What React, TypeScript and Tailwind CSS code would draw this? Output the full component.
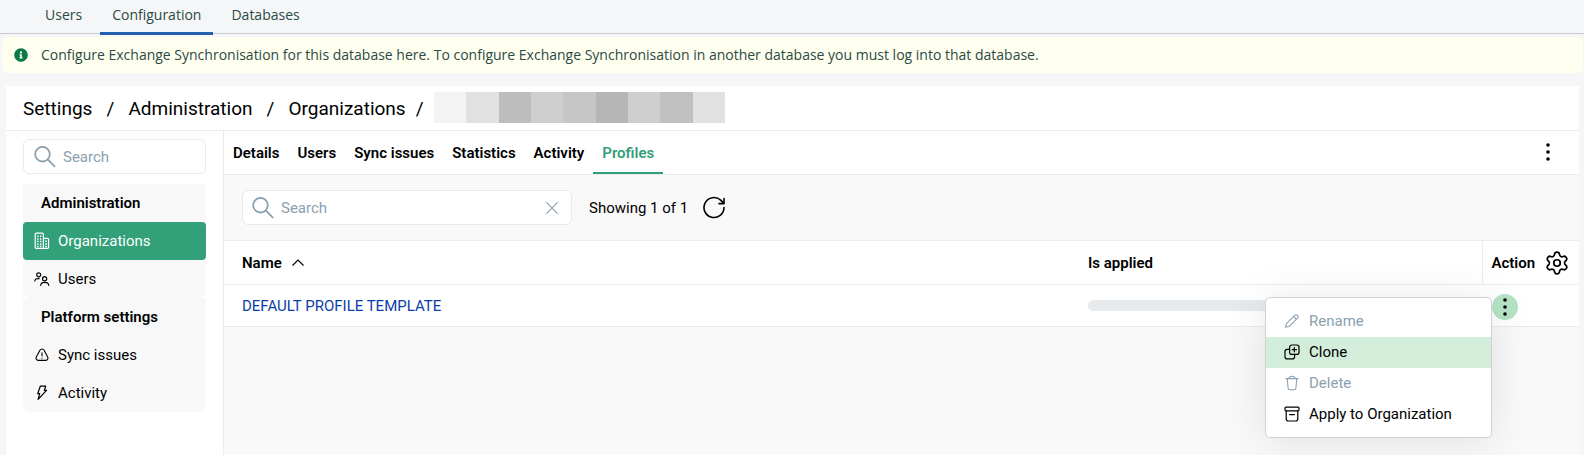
import React from 'react';
import { Settings } from 'lucide-react';
import { FaInfoCircle } from 'react-icons/fa';

interface IconProps {
  className?: string;
}

const SearchIcon: React.FC<IconProps> = ({ className }) => (
  <svg viewBox="0 0 22 22" fill="none" stroke="currentColor" strokeWidth="1.8" strokeLinecap="round" className={className}>
    <circle cx="8.5" cy="8.2" r="7.3" />
    <path d="M13.7 13.4 20.6 20.3" />
  </svg>
);

const CloseIcon: React.FC<IconProps> = ({ className }) => (
  <svg viewBox="0 0 12 12" fill="none" stroke="currentColor" strokeWidth="1.2" strokeLinecap="round" className={className}>
    <path d="M.7.7 11.3 11.3M11.3.7.7 11.3" />
  </svg>
);

const DotsIcon: React.FC<IconProps> = ({ className }) => (
  <svg viewBox="0 0 4 18" fill="currentColor" className={className}>
    <circle cx="2" cy="2" r="1.8" />
    <circle cx="2" cy="9" r="1.8" />
    <circle cx="2" cy="16" r="1.8" />
  </svg>
);

const RefreshIcon: React.FC<IconProps> = ({ className }) => (
  <svg viewBox="0 0 24 24" fill="none" stroke="currentColor" strokeWidth="1.6" strokeLinecap="round" strokeLinejoin="round" className={className}>
    <path d="M22 11.500a10 10 0 1 1-3.300-7.400l2.900 3" />
    <path d="M22 2.600v5h-5" />
  </svg>
);

const BuildingIcon: React.FC<IconProps> = ({ className }) => (
  <svg viewBox="0 0 16 18" fill="none" stroke="currentColor" strokeWidth="1.2" strokeLinejoin="round" className={className}>
    <path d="M9.4 16.4H2.2a1 1 0 0 1-1-1V2.2a1 1 0 0 1 1-1h6.2a1 1 0 0 1 1 1v14.2Z" />
    <path d="M9.4 6.3h4.2a1 1 0 0 1 1 1v8.1a1 1 0 0 1-1 1H9.4" />
    <path d="M3.2 4.2h1.4M6 4.2h1.4M3.2 6.9h1.4M6 6.9h1.4M3.2 9.6h1.4M6 9.6h1.4M3.2 12.3h1.4M6 12.3h1.4M11.3 9.3h1.6M11.3 12h1.6M3.2 14.5h1.4M6 14.5h1.4M11.3 14.5h1.6" strokeWidth="1.5" />
  </svg>
);

const UsersIcon: React.FC<IconProps> = ({ className }) => (
  <svg viewBox="0 0 16 14" fill="none" stroke="currentColor" strokeWidth="1.2" strokeLinecap="round" className={className}>
    <circle cx="4.7" cy="2.8" r="2" />
    <path d="M.8 9c.2-2 1.600-2.700 4.300-2.400" />
    <circle cx="10.600" cy="6.800" r="2.100" />
    <path d="M6.700 13.300c.2-2 1.700-2.900 4-2.900s3.800.9 4.100 2.900" />
  </svg>
);

const WarningIcon: React.FC<IconProps> = ({ className }) => (
  <svg viewBox="0 0 14 14" fill="none" stroke="currentColor" strokeWidth="1.1" strokeLinecap="round" className={className}>
    <path d="M4.900 2.200a2.400 2.400 0 0 1 4.200 0l3.600 6.900a2.200 2.200 0 0 1-1.900 3.300H3.200a2.200 2.200 0 0 1-1.900-3.300Z" />
    <path d="M7 4.800v3M7 10v.2" />
  </svg>
);

const BoltIcon: React.FC<IconProps> = ({ className }) => (
  <svg viewBox="0 0 12 16" fill="none" stroke="currentColor" strokeWidth="1.2" strokeLinejoin="round" className={className}>
    <path d="M4.300 1.200h5.400L8.300 5.300h2.200L2.100 14.300l1.600-5.600H1.700Z" />
  </svg>
);

const PencilIcon: React.FC<IconProps> = ({ className }) => (
  <svg viewBox="0 0 16 16" fill="none" stroke="currentColor" strokeWidth="1.1" strokeLinejoin="round" className={className}>
    <path d="M10.700 2.300a1.900 1.900 0 0 1 2.800 0 1.900 1.900 0 0 1 0 2.800L5.200 13.300l-3.700 1 .9-3.700Z" />
    <path d="m9.600 3.400 2.800 2.800" />
  </svg>
);

const CloneIcon: React.FC<IconProps> = ({ className }) => (
  <svg viewBox="0 0 16 16" fill="none" stroke="currentColor" strokeWidth="1.2" strokeLinecap="round" strokeLinejoin="round" className={className}>
    <rect x="5.600" y="1" width="9.400" height="9.400" rx="2.200" />
    <path d="M5.600 5.300H3.200A2.200 2.200 0 0 0 1 7.500v5.200a2.200 2.200 0 0 0 2.200 2.200h5.200a2.200 2.200 0 0 0 2.200-2.200v-2.300" />
    <path d="M10.300 3.600v4.200M8.200 5.700h4.200" />
  </svg>
);

const TrashIcon: React.FC<IconProps> = ({ className }) => (
  <svg viewBox="0 0 16 16" fill="none" stroke="currentColor" strokeWidth="1.1" strokeLinecap="round" strokeLinejoin="round" className={className}>
    <path d="M2 3.600h12M5 3.600C5.200 2 6.100 1.200 8 1.200s2.800.8 3 2.400" />
    <path d="m3.200 3.600.9 9.600a1.700 1.700 0 0 0 1.700 1.500h4.400a1.700 1.700 0 0 0 1.700-1.500l.9-9.600" />
  </svg>
);

const ArchiveIcon: React.FC<IconProps> = ({ className }) => (
  <svg viewBox="0 0 16 16" fill="none" stroke="currentColor" strokeWidth="1.2" strokeLinecap="round" strokeLinejoin="round" className={className}>
    <rect x="1" y="1.200" width="14" height="3.600" rx="1" />
    <path d="M2.200 4.800v8a2.200 2.200 0 0 0 2.200 2.200h7.200a2.200 2.200 0 0 0 2.200-2.200v-8" />
    <path d="M5.600 8.600h4.800" />
  </svg>
);

const ChevronUpIcon: React.FC<IconProps> = ({ className }) => (
  <svg viewBox="0 0 12 7" fill="none" stroke="currentColor" strokeWidth="1.2" className={className}>
    <path d="M.5 6.500 6 1l5.500 5.500" />
  </svg>
);

const topTabs = ['Users', 'Configuration', 'Databases'];
const orgTabs = ['Details', 'Users', 'Sync issues', 'Statistics', 'Activity', 'Profiles'];
const crumbs = ['Settings', 'Administration', 'Organizations'];

const navGroups = [
  {
    title: 'Administration',
    items: [
      { label: 'Organizations', icon: <BuildingIcon className="w-4 h-[18px]" />, active: true },
      { label: 'Users', icon: <UsersIcon className="w-4 h-[14px]" />, active: false },
    ],
  },
  {
    title: 'Platform settings',
    items: [
      { label: 'Sync issues', icon: <WarningIcon className="w-[14px] h-[14px]" />, active: false },
      { label: 'Activity', icon: <BoltIcon className="w-3 h-4" />, active: false },
    ],
  },
];

const menuItems = [
  { label: 'Rename', icon: <PencilIcon className="size-4" />, disabled: true, active: false },
  { label: 'Clone', icon: <CloneIcon className="size-4" />, disabled: false, active: true },
  { label: 'Delete', icon: <TrashIcon className="size-4" />, disabled: true, active: false },
  { label: 'Apply to Organization', icon: <ArchiveIcon className="size-4" />, disabled: false, active: false },
];

const TopBar: React.FC = () => (
  <nav className="flex h-[34px] gap-[6px] border-b border-[#c9ccd1] pl-[33px] font-['Open_Sans',sans-serif] text-sm text-[#2b4a43]">
    {topTabs.map((tab) => (
      <a
        key={tab}
        href="#"
        className={`h-[35px] px-3 pt-[5px] border-b-[3px] ${tab === 'Configuration' ? 'border-[#2360b0]' : 'border-transparent'}`}
      >
        {tab}
      </a>
    ))}
  </nav>
);

const Banner: React.FC = () => (
  <div className="mt-[3px] ml-[2px] mr-px h-9 flex items-center gap-[13px] pl-3 rounded-md bg-[#fffff0] font-['Open_Sans',sans-serif] text-sm text-[#2b4a43]">
    <FaInfoCircle className="size-[14px] shrink-0 text-[#0b7a4b]" />
    <p>
      Configure Exchange Synchronisation for this database here. To configure Exchange Synchronisation in another database you must log into that database.
    </p>
  </div>
);

const Breadcrumbs: React.FC = () => (
  <div className="flex h-[45px] items-center border-b border-[#ececec] pb-px pl-[17px] text-[19px] leading-6">
    {crumbs.map((crumb) => (
      <React.Fragment key={crumb}>
        <a href="#" className="pt-[2px]">{crumb}</a>
        <span className="w-9 pt-[2px] text-center last-of-type:w-7">/</span>
      </React.Fragment>
    ))}
    <div className="flex h-8 pb-px">
      <i className="w-8 bg-[#f3f3f3]" />
      <i className="w-[33px] bg-[#e1e1e1]" />
      <i className="w-8 bg-[#bdbdbd]" />
      <i className="w-8 bg-[#cfcfcf]" />
      <i className="w-[33px] bg-[#c6c6c6]" />
      <i className="w-8 bg-[#b6b6b6]" />
      <i className="w-8 bg-[#cecece]" />
      <i className="w-[33px] bg-[#c0c0c0]" />
      <i className="w-8 bg-[#e2e2e2]" />
    </div>
  </div>
);

const Sidebar: React.FC = () => (
  <aside className="w-[218px] shrink-0 border-r border-[#ececec] px-[17px] pt-2">
    <label className="flex h-[35px] items-center gap-[7px] rounded-md border border-[#e8eaeb] pl-[10px] pr-2 text-[#8ba0ae]">
      <SearchIcon className="size-[22px] shrink-0" />
      <input type="text" aria-label="Search navigation" placeholder="Search" className="w-full min-w-0 outline-none placeholder:text-[#8ba0ae]" />
    </label>
    <div className="mt-[10px]">
      {navGroups.map((group) => (
        <section key={group.title} className="rounded-b-lg bg-[#f8f8f8]">
          <h2 className="flex h-[38px] items-center pl-[18px] font-semibold">{group.title}</h2>
          {group.items.map((item) => (
            <a
              key={item.label}
              href="#"
              className={`flex h-[38px] items-center rounded pl-[10px] ${item.active ? 'bg-[#32a079] text-white' : ''}`}
            >
              <span className="mr-2 flex w-[17px] justify-center">{item.icon}</span>
              {item.label}
            </a>
          ))}
        </section>
      ))}
    </div>
  </aside>
);

const ActionMenu: React.FC = () => (
  <div
    role="menu"
    className="absolute right-full top-[3px] w-[227px] rounded-[5px] border border-[#d0d2d3] bg-white pt-2 pb-[7px] shadow-[0_4px_44px_rgba(0,0,0,0.1)]"
  >
    {menuItems.map((item) => (
      <button
        key={item.label}
        role="menuitem"
        disabled={item.disabled}
        className={`flex h-[31px] w-full items-center gap-[9px] pl-[18px] whitespace-nowrap ${item.active ? 'bg-[#d3eddb]' : ''} ${item.disabled ? 'text-[#8ba0ae]' : ''}`}
      >
        {item.icon}
        {item.label}
      </button>
    ))}
  </div>
);

const ProfilesTable: React.FC = () => (
  <table className="w-full table-fixed border-y border-[#ececec] bg-white text-left">
    <thead>
      <tr className="h-[44px] border-b border-[#ececec]">
        <th className="pl-[18px] font-semibold">
          <button className="flex items-center gap-[10px]">
            Name
            <ChevronUpIcon className="h-[7px] w-3" />
          </button>
        </th>
        <th className="w-[403px] pl-[9px] font-semibold">Is applied</th>
        <th className="w-[97px] border-l border-[#ececec] pl-[9px] font-semibold">
          <div className="flex items-center justify-between pr-[9px]">
            Action
            <button aria-label="Table settings">
              <Settings size={26} strokeWidth={1.6} />
            </button>
          </div>
        </th>
      </tr>
    </thead>
    <tbody>
      <tr className="h-[42px]">
        <td className="pl-[18px]">
          <a href="#" className="text-[#0b3ea8]">DEFAULT PROFILE TEMPLATE</a>
        </td>
        <td className="px-[9px]">
          <div className="h-[11px] rounded-full bg-[#e6eaed]" />
        </td>
        <td className="pl-[10px]">
          <div className="relative mt-[2px] w-[26px]">
            <button aria-label="Row actions" className="flex size-[26px] items-center justify-center rounded-full bg-[#b5e4c4]">
              <DotsIcon className="h-[18px] w-1" />
            </button>
            <ActionMenu />
          </div>
        </td>
      </tr>
    </tbody>
  </table>
);

const Content: React.FC = () => (
  <main className="min-w-0 flex-1 bg-[#f9f9f9]">
    <div className="flex h-[44px] items-center justify-between border-b border-[#ececec] bg-white pr-[29px]">
      <nav className="flex font-semibold">
        {orgTabs.map((tab) => (
          <a
            key={tab}
            href="#"
            className={`flex h-[43px] items-center border-b-2 px-[9px] pt-[2px] ${tab === 'Profiles' ? 'border-[#32a079] text-[#32a079]' : 'border-transparent'}`}
          >
            {tab}
          </a>
        ))}
      </nav>
      <button aria-label="More" className="pb-[2px]">
        <DotsIcon className="h-[18px] w-1" />
      </button>
    </div>

    <div className="flex h-[65px] items-center pl-[18px]">
      <div className="flex h-[35px] w-[330px] items-center gap-[7px] rounded-md border border-[#e8eaeb] bg-white px-[9px] text-[#8ba0ae]">
        <SearchIcon className="size-[22px] shrink-0" />
        <input type="text" aria-label="Search profiles" placeholder="Search" className="w-full min-w-0 outline-none placeholder:text-[#8ba0ae]" />
        <button aria-label="Clear" className="px-1">
          <CloseIcon className="size-3" />
        </button>
      </div>
      <span className="ml-[17px]">Showing 1 of 1</span>
      <button aria-label="Refresh" className="ml-[14px]">
        <RefreshIcon className="size-6" />
      </button>
    </div>

    <ProfilesTable />
  </main>
);

export default function App() {
  return (
    <div className="flex min-h-screen flex-col overflow-hidden bg-[#f5f6f8] font-['Roboto',sans-serif] text-[15px] leading-5 text-black">
      <TopBar />
      <Banner />
      <div className="mt-[13px] ml-[6px] mr-[5px] flex flex-1 flex-col bg-white">
        <Breadcrumbs />
        <div className="flex flex-1">
          <Sidebar />
          <Content />
        </div>
      </div>
    </div>
  );
}
